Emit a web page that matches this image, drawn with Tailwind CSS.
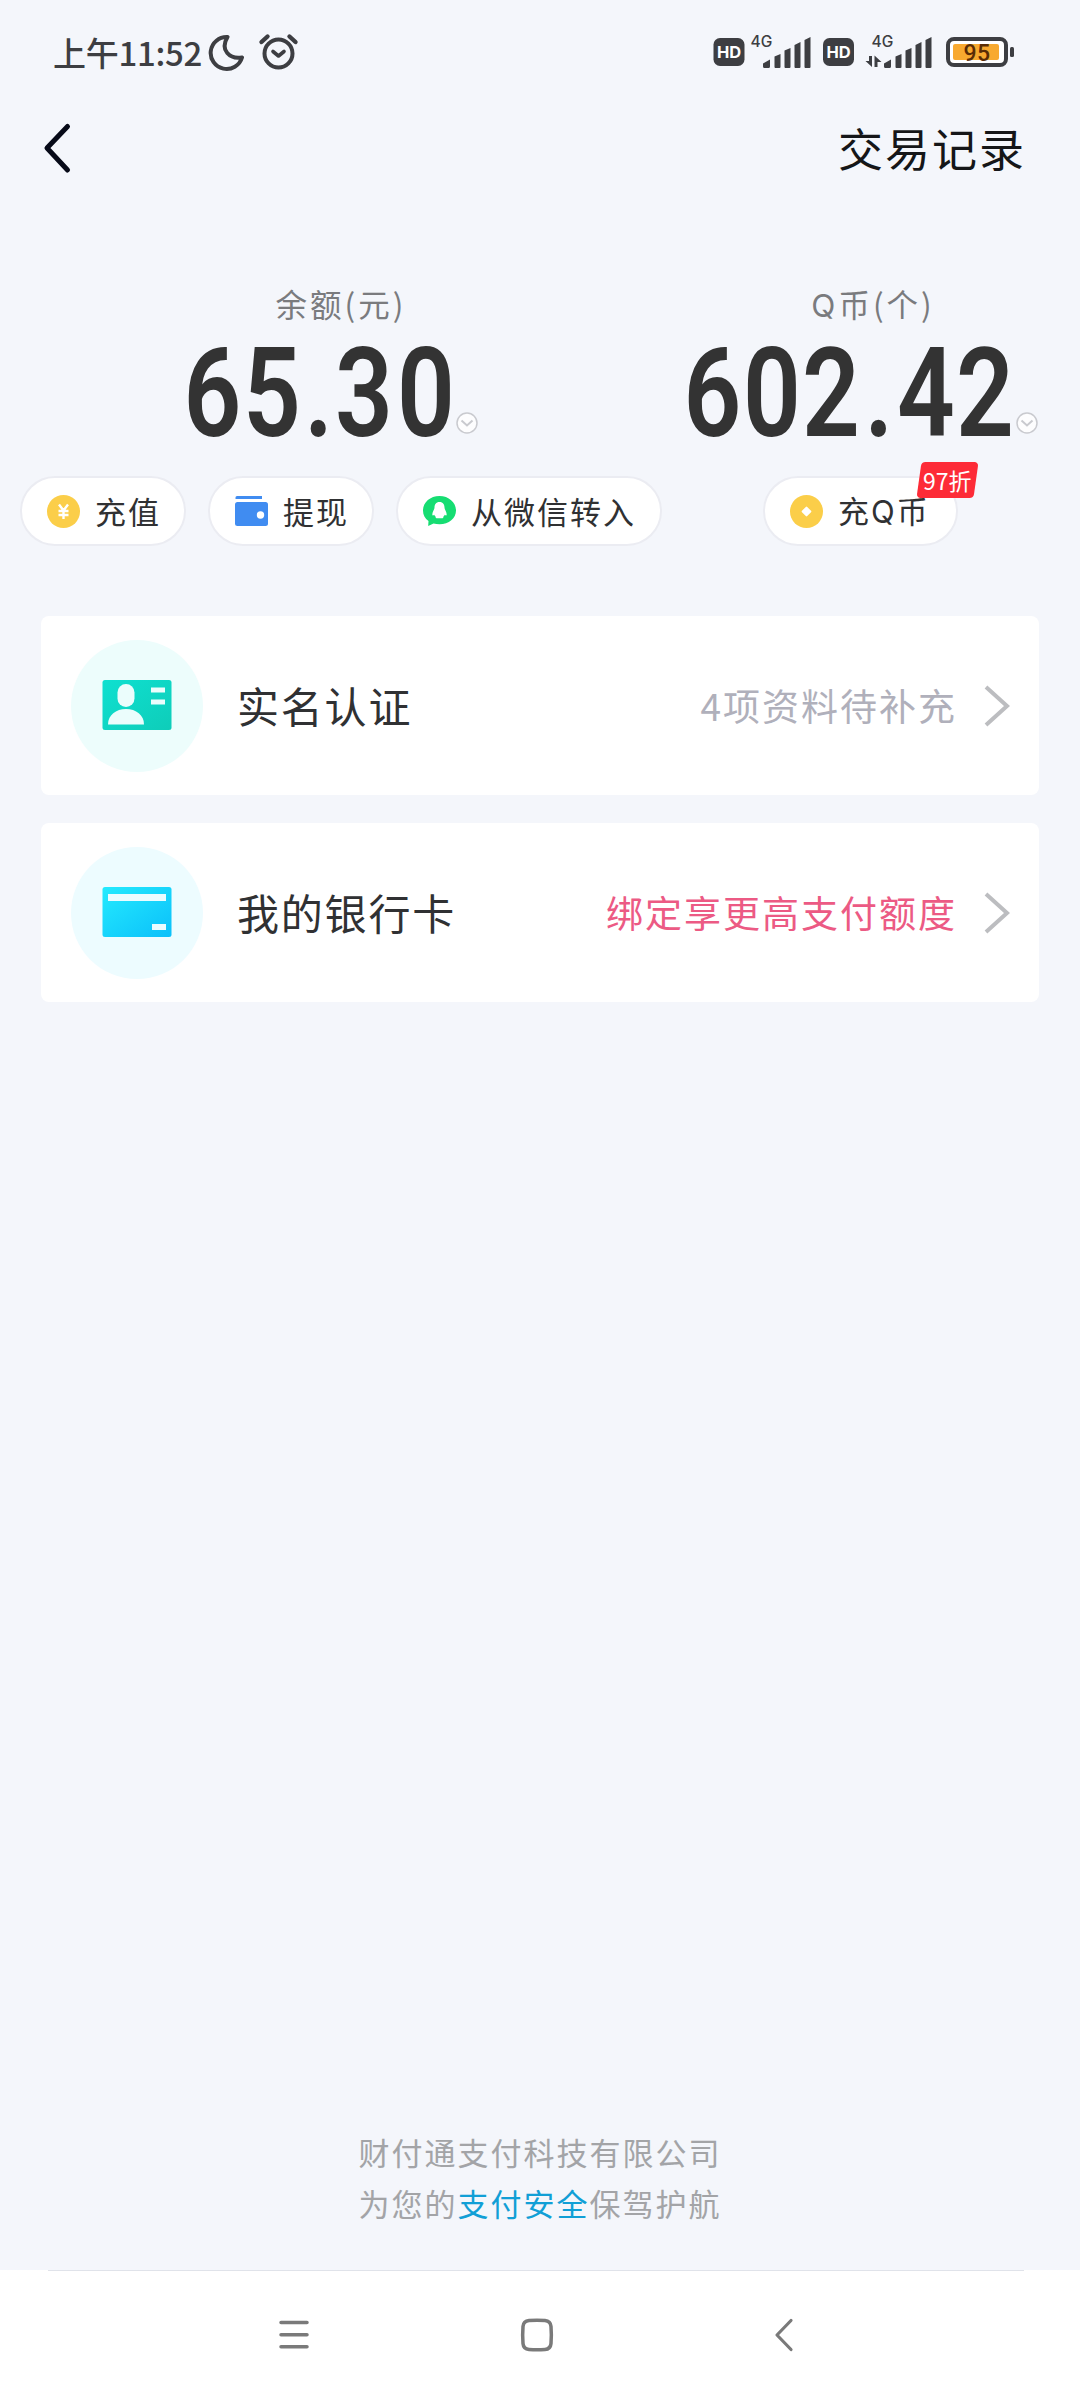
<!DOCTYPE html>
<html lang="zh-CN">
<head>
<meta charset="utf-8">
<title>我的钱包</title>
<script src="https://cdn.jsdelivr.net/npm/@tailwindcss/browser@4"></script>
</head>
<body class="bg-[#f4f6fb]">
<div class="flex flex-col w-[1080px] h-[2400px] overflow-hidden font-['Noto_Sans_CJK_SC',sans-serif] leading-none text-[#303133]">

  <!-- status bar -->
  <div class="flex h-[104px] shrink-0 items-center justify-between pl-[53px] pr-[66px] text-[#3d3e42]">
    <div class="flex items-center">
      <span class="w-[155px] text-[33px] font-medium whitespace-nowrap tracking-[-0.3px]">上午11:52</span>
      <svg class="w-[96px] h-[44px]" viewBox="208 30 96 44" fill="none" stroke="currentColor" stroke-width="4" stroke-linecap="round" stroke-linejoin="round">
        <path d="M227.500 37a16 16 0 1 0 14.500 20.500c-12 2-22.500-7-14.500-20.500z"/>
        <circle cx="278.500" cy="53.500" r="14"/>
        <path d="M273 51.500l5.500 4.500 5.500-4.500" stroke-width="3.600"/>
        <path d="M261.500 42l6-5.500M295.500 42l-6-5.500" stroke-width="4.400"/>
      </svg>
    </div>
    <svg class="w-[302px] h-[40px]" viewBox="712 32 302 40" fill="currentColor" font-family="Inter, sans-serif">
      <rect x="713.500" y="38" width="31" height="28" rx="6.500"/>
      <text x="729" y="58" font-size="16.500" font-weight="700" fill="#fff" text-anchor="middle">HD</text>
      <text x="750.500" y="47" font-size="15.500" font-weight="500">4G</text>
      <path d="M763 63.500l7-4v7a1.500 1.500 0 0 1-1.500 1.500h-4a1.500 1.500 0 0 1-1.500-1.500zM774.500 56.500l6-2.500v13a1 1 0 0 1-1 1h-4a1 1 0 0 1-1-1zM784.500 50.500l6-2.500v19a1 1 0 0 1-1 1h-4a1 1 0 0 1-1-1zM794.500 45l6-3v25a1 1 0 0 1-1 1h-4a1 1 0 0 1-1-1zM804.500 40l6-3v30a1 1 0 0 1-1 1h-4a1 1 0 0 1-1-1z"/>
      <rect x="823" y="38" width="31" height="28" rx="6.500"/>
      <text x="838.500" y="58" font-size="16.500" font-weight="700" fill="#fff" text-anchor="middle">HD</text>
      <text x="871.500" y="47" font-size="15.500" font-weight="500">4G</text>
      <path d="M869 56h3v11l-6.500-6h3.500zM874.500 67h3v-5h4l-7-6.500z"/>
      <path d="M884 63.500l7-4v7a1.500 1.500 0 0 1-1.500 1.500h-4a1.500 1.500 0 0 1-1.500-1.500zM895.500 56.500l6-2.500v13a1 1 0 0 1-1 1h-4a1 1 0 0 1-1-1zM905.500 50.500l6-2.500v19a1 1 0 0 1-1 1h-4a1 1 0 0 1-1-1zM915.500 45l6-3v25a1 1 0 0 1-1 1h-4a1 1 0 0 1-1-1zM925.500 40l6-3v30a1 1 0 0 1-1 1h-4a1 1 0 0 1-1-1z"/>
      <rect x="948" y="39" width="58" height="26" rx="6" fill="#fff" stroke="currentColor" stroke-width="4"/>
      <rect x="953" y="44" width="46" height="16" rx="2" fill="#f8a92f"/>
      <rect x="1010" y="47" width="4" height="10" rx="1.500"/>
      <text x="977" y="60.500" font-size="23" font-weight="500" fill="#5a2c05" text-anchor="middle" font-family="Roboto, sans-serif" letter-spacing=".5">95</text>
    </svg>
  </div>

  <!-- header -->
  <div class="flex h-[88px] shrink-0 items-center justify-between pl-[42px] pr-[54px]">
    <svg class="w-[30px] h-[52px]" viewBox="0 0 30 52" fill="none" stroke="#070a18" stroke-width="5" stroke-linecap="round" stroke-linejoin="round"><path d="M25.500 4.500L5 26l20.500 22"/></svg>
    <span class="text-[45px] tracking-[2px] text-[#151618] -mt-[2px]">交易记录</span>
  </div>

  <!-- balances -->
  <div class="flex h-[424px] shrink-0 pt-[91px]">
    <section class="w-[662px]">
      <h2 class="h-[42px] pl-[20px] text-center text-[31.5px] leading-[40px] tracking-[3px] text-[#7a7b7e]">余额(元)</h2>
      <div class="flex h-[120px] items-start pl-[180px]">
        <svg class="w-[276px] h-[120px] overflow-visible" viewBox="180 325 276 120" fill="#333" font-family="Roboto, sans-serif" font-size="125" font-weight="600" text-anchor="middle">
          <text transform="scale(.81 1)" y="436" x="262.300 335.800 393.500 449.400 525.900">65.30</text>
        </svg>
        <svg class="mt-[87px] w-[22px] h-[22px]" viewBox="0 0 22 22" fill="#fdfdfe" stroke="#c9cacf" stroke-width="1.500"><circle cx="11" cy="11" r="10"/><path d="M5.500 8.500l5.500 5 5.500-5" fill="none" stroke-width="2"/></svg>
      </div>
      <div class="mt-[31px] flex gap-[22px] pl-[20px] text-[31px] tracking-[2px]">
        <div class="flex h-[70px] w-[166px] items-center gap-[15px] rounded-full border-2 border-[#ebecf2] bg-white pl-[25px] whitespace-nowrap">
          <svg class="w-[33px] h-[33px] shrink-0" viewBox="0 0 33 33"><circle cx="16.500" cy="16.500" r="16.500" fill="#fbce49"/><path d="M12 9.500l4.500 6 4.500-6M16.500 15.500V24M11.500 16h10M11.500 20h10" fill="none" stroke="#fff" stroke-width="2.400"/></svg>
          <span class="-mt-[1px]">充值</span>
        </div>
        <div class="flex h-[70px] w-[166px] items-center gap-[15px] rounded-full border-2 border-[#ebecf2] bg-white pl-[25px] whitespace-nowrap">
          <svg class="w-[33px] h-[32px] shrink-0" viewBox="0 0 33 32" fill="#408cf1"><path d="M2 1h25v3H.5V2.500A1.500 1.500 0 0 1 2 1z"/><rect y="7" width="33" height="24" rx="2.500"/><circle cx="25.500" cy="20" r="3.700" fill="#fff"/></svg>
          <span class="-mt-[1px]">提现</span>
        </div>
        <div class="flex h-[70px] w-[266px] items-center gap-[15px] rounded-full border-2 border-[#ebecf2] bg-white pl-[25px] whitespace-nowrap">
          <svg class="w-[33px] h-[33px] shrink-0" viewBox="0 0 33 33"><path d="M16.500 1C7 1 0 7.500 0 15.500c0 4.500 2 8 5.500 10.500l-.3 5 5.300-2.500c2 .5 4 .8 6 .8 9.500 0 16.500-6 16.500-13.800S26 1 16.500 1z" fill="#16dd72"/><path d="M16.500 7c-3.600 0-5 2.500-5 5.500 0 2.200-2.200 4.300-2.200 7 0 1.200 1 1.200 1.900.2.400 1 1 1.700 1.700 2.200-.9 1.200.6 1.400 3.600 1.400s4.500-.2 3.600-1.400c.7-.5 1.300-1.200 1.700-2.200.9 1 1.900 1 1.900-.2 0-2.700-2.200-4.800-2.200-7 0-3-1.400-5.500-5-5.500z" fill="#fff"/></svg>
          <span class="-mt-[1px]">从微信转入</span>
        </div>
      </div>
    </section>
    <section class="w-[418px]">
      <h2 class="h-[42px] pl-[4px] text-center text-[31.5px] leading-[40px] tracking-[3px] text-[#7a7b7e]"><span class="font-['Inter',sans-serif]">Q</span>币(个)</h2>
      <div class="flex h-[120px] items-start pl-[18px]">
        <svg class="w-[336px] h-[120px] overflow-visible" viewBox="680 325 336 120" fill="#333" font-family="Roboto, sans-serif" font-size="125" font-weight="600" text-anchor="middle">
          <text transform="scale(.81 1)" y="436" x="879.400 953.100 1025.900 1085.200 1143.200 1216">602.42</text>
        </svg>
        <svg class="mt-[87px] w-[22px] h-[22px]" viewBox="0 0 22 22" fill="#fdfdfe" stroke="#c9cacf" stroke-width="1.500"><circle cx="11" cy="11" r="10"/><path d="M5.500 8.500l5.500 5 5.500-5" fill="none" stroke-width="2"/></svg>
      </div>
      <div class="relative ml-[101px] mt-[31px] flex h-[70px] w-[195px] items-center gap-[15px] rounded-full border-2 border-[#ebecf2] bg-white pl-[25px] text-[31px] tracking-[2px] whitespace-nowrap">
        <svg class="w-[33px] h-[33px] shrink-0" viewBox="0 0 33 33"><circle cx="16.500" cy="16.500" r="16.500" fill="#fbce49"/><rect x="12.800" y="12.800" width="7.400" height="7.400" rx="1" fill="#fff" transform="rotate(45 16.500 16.500)"/></svg>
        <span class="-mt-[1px]">充<span class="font-['Inter',sans-serif]">Q</span>币</span>
        <div class="absolute left-[154px] top-[-16px] flex h-[36px] w-[57px] -skew-x-[8deg] items-center justify-center rounded-[4px] bg-[#fd2b37] text-[23px] tracking-[0px] text-white"><span class="skew-x-[8deg]">97折</span></div>
      </div>
    </section>
  </div>

  <!-- entries -->
  <div class="flex flex-col gap-7 px-[41px]">
    <div class="flex h-[179px] items-center rounded-lg bg-white pl-[30px] pr-[29px]">
      <svg class="w-[132px] h-[132px]" viewBox="0 1 132 132">
        <defs><linearGradient id="id-card" x1="0" y1="0" x2="1" y2="1"><stop stop-color="#0fe0d0"/><stop offset="1" stop-color="#0ecdb9"/></linearGradient></defs>
        <circle cx="66" cy="67" r="66" fill="#edfdfc"/>
        <rect x="31.500" y="41" width="69" height="50" rx="2.500" fill="url(#id-card)"/>
        <rect x="46.500" y="45" width="17" height="23" rx="8.500" fill="#ebfdfc"/>
        <path d="M37 85.500c0-9.500 8-15.500 18-15.500s18 6 18 15.500z" fill="#ebfdfc"/>
        <path d="M80 48.500h14v5H80zM80 60.500h14v5H80z" fill="#ebfdfc"/>
      </svg>
      <span class="ml-[34px] text-[42px] tracking-[1.8px] -mt-[2px]">实名认证</span>
      <span class="ml-auto mr-[27px] text-[37px] tracking-[2px] text-[#b0b0bb]">4项资料待补充</span>
      <svg class="w-[26px] h-[44px]" viewBox="0 0 26 44" fill="none" stroke="#bcbdc0" stroke-width="4"><path d="M2 3l21 19L2 41"/></svg>
    </div>
    <div class="flex h-[179px] items-center rounded-lg bg-white pl-[30px] pr-[29px]">
      <svg class="w-[132px] h-[132px]" viewBox="0 1 132 132">
        <defs><linearGradient id="bank-card" x1="0" y1="0" x2="1" y2="1"><stop stop-color="#24eafe"/><stop offset="1" stop-color="#0bc0fa"/></linearGradient></defs>
        <circle cx="66" cy="67" r="66" fill="#edfcff"/>
        <rect x="31.500" y="41" width="69" height="50" rx="2.500" fill="url(#bank-card)"/>
        <path d="M37 48h58v7H37zM81 78h14v6H81z" fill="#ebfcff"/>
      </svg>
      <span class="ml-[34px] text-[42px] tracking-[1.8px] -mt-[2px]">我的银行卡</span>
      <span class="ml-auto mr-[27px] text-[37px] tracking-[2px] text-[#ec5a84]">绑定享更高支付额度</span>
      <svg class="w-[26px] h-[44px]" viewBox="0 0 26 44" fill="none" stroke="#bcbdc0" stroke-width="4"><path d="M2 3l21 19L2 41"/></svg>
    </div>
  </div>

  <!-- footer -->
  <footer class="mt-auto pb-[42px] text-center text-[31px] leading-[51px] tracking-[2px] text-[#a3a4a7]">
    <p>财付通支付科技有限公司</p>
    <p>为您的<span class="text-[#119fd6]">支付安全</span>保驾护航</p>
  </footer>

  <!-- system navigation -->
  <nav class="h-[130px] shrink-0 bg-white">
    <div class="ml-[48px] mr-[56px] h-px bg-[#e0e3ea]"></div>
    <svg class="w-[1080px] h-[129px]" viewBox="0 2271 1080 129" fill="none" stroke="#7a7a7a" stroke-width="3.500" stroke-linecap="round" stroke-linejoin="round">
      <path d="M281 2322.500h26M281 2334.700h26M281 2346.800h26"/>
      <path d="M529 2320.500q8-.7 16 0 5.500.5 6 6 .7 8.500 0 17-.5 5.500-6 6-8 .7-16 0-5.500-.5-6-6-.7-8.500 0-17 .5-5.500 6-6z"/>
      <path d="M791 2320.500L777 2335l14 14.500" stroke-width="3.200"/>
    </svg>
  </nav>
</div>
</body>
</html>
